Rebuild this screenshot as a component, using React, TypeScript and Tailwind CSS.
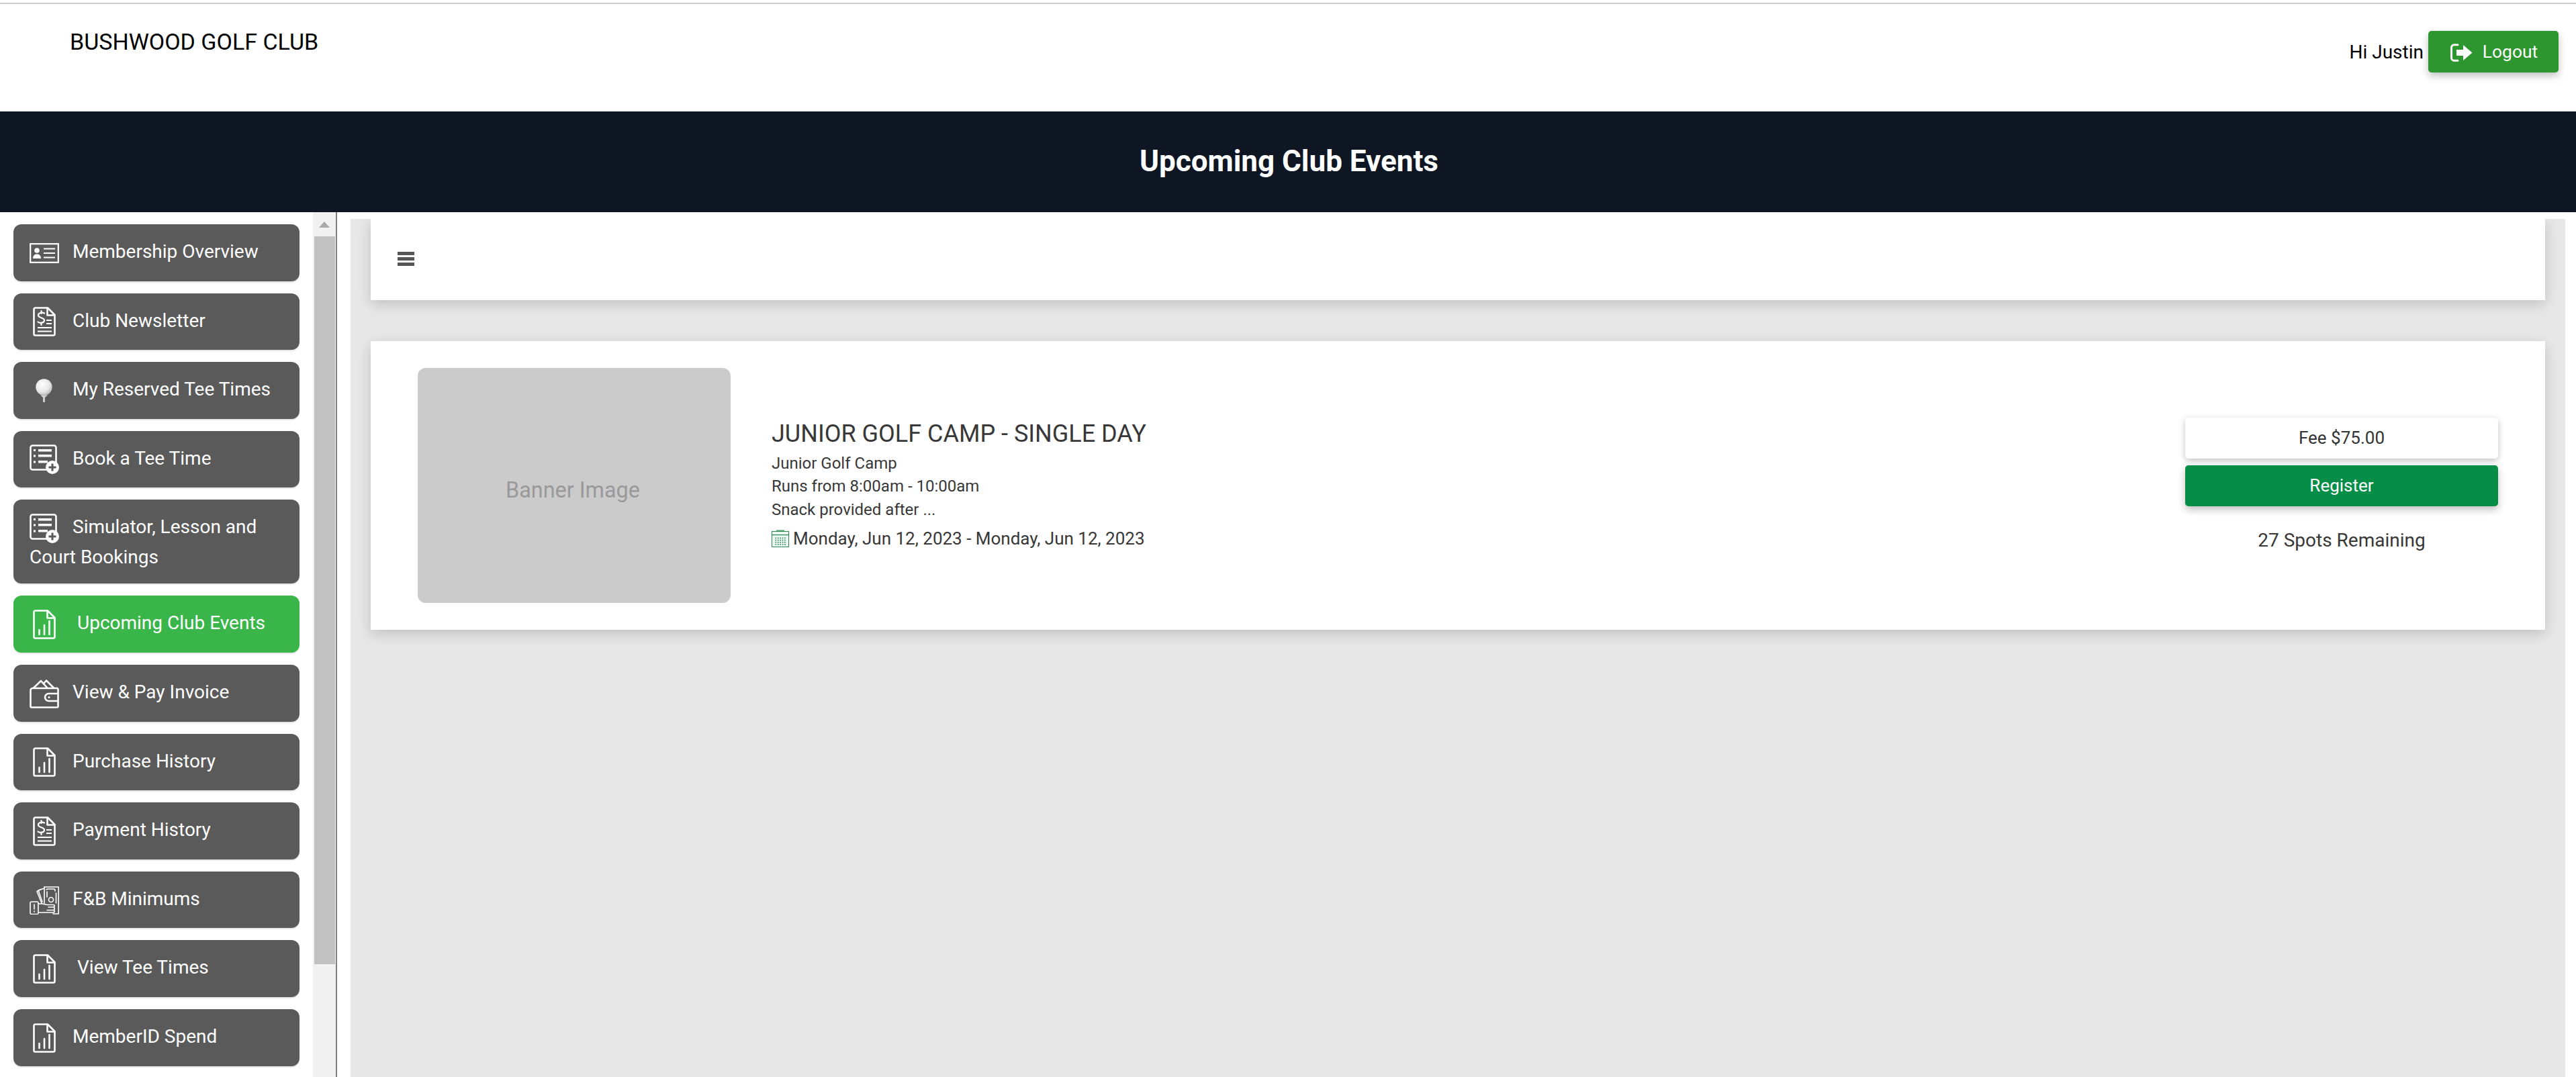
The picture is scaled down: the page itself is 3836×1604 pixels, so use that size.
import React from "react";

const S = { fill: "none", stroke: "white", strokeWidth: 2.6, strokeLinecap: "round" as const, strokeLinejoin: "round" as const };

function IdCardIcon() {
  return (
    <svg width="44" height="30" viewBox="0 0 44 30" className="inline-block align-middle mr-[20px] -my-2">
      <rect x="1.2" y="1.2" width="41.6" height="27.6" fill="none" stroke="white" strokeWidth="2.2" />
      <circle cx="11" cy="11" r="3.8" fill="white" />
      <path d="M5 23 C5 18 8 16.5 11 16.5 C14 16.5 17 18 17 23 Z" fill="white" />
      <path d="M21 8.5H38M21 15H38M21 21.5H38" stroke="white" strokeWidth="2" />
    </svg>
  );
}

function DocOutline() {
  return (
    <>
      <path d="M3.5 1.5H22L32.5 12V40.5A2 2 0 0 1 30.5 42.5H3.5A2 2 0 0 1 1.5 40.5V3.5A2 2 0 0 1 3.5 1.5Z" {...S} />
      <path d="M21.5 2V12.5H32" {...S} />
    </>
  );
}

function DocBarsIcon({ wide }: { wide?: boolean }) {
  return (
    <svg width="34" height="44" viewBox="0 0 34 44" className={wide ? "inline-block align-middle ml-[5px] mr-[32px] -my-2" : "inline-block align-middle ml-[5px] mr-[25px] -my-2"}>
      <DocOutline />
      <path d="M9.5 37V30M17 37V23M24.5 37V17" {...S} />
    </svg>
  );
}

function DocDollarIcon() {
  return (
    <svg width="34" height="44" viewBox="0 0 34 44" className="inline-block align-middle ml-[5px] mr-[25px] -my-2">
      <DocOutline />
      <path d="M17 9.5C15 8 8 8 8 12.5C8 17 17 15.5 17 20C17 24.5 10 24.5 7.5 22.5M12.5 6V10M12.5 23.5V27" fill="none" stroke="white" strokeWidth="2.2" strokeLinecap="round" />
      <path d="M20 20H28M20 25H28M7 31H28M7 36.5H28" fill="none" stroke="white" strokeWidth="2" />
    </svg>
  );
}

function ListPlusIcon() {
  return (
    <svg width="44" height="44" viewBox="0 0 44 44" className="inline-block align-middle mr-[20px] -my-2">
      <rect x="1.5" y="1.5" width="38" height="36" rx="3" {...S} />
      <path d="M6 8.5H9M6 17H9M6 26H9" stroke="white" strokeWidth="3" />
      <rect x="13" y="7" width="20" height="3.5" fill="white" />
      <rect x="13" y="15" width="20" height="3.5" fill="white" />
      <rect x="13" y="24" width="14" height="3.5" fill="white" />
      <circle cx="34" cy="34" r="10" fill="white" />
      <path d="M34 28.5V39.5M28.5 34H39.5" stroke="#5a5a5a" strokeWidth="3" />
    </svg>
  );
}

function GolfBallIcon() {
  return (
    <svg width="25" height="36" viewBox="0 0 25 36" className="inline-block align-middle ml-[9px] mr-[30px] -my-2">
      <defs>
        <radialGradient id="ball" cx="0.4" cy="0.35" r="0.75">
          <stop offset="0" stopColor="#ffffff" />
          <stop offset="0.6" stopColor="#e6e6e6" />
          <stop offset="1" stopColor="#a9a9a9" />
        </radialGradient>
      </defs>
      <circle cx="12.5" cy="12.5" r="12.2" fill="url(#ball)" />
      <path d="M7 24.5H18L14 28V35H11V28Z" fill="#cfcfcf" />
    </svg>
  );
}

function WalletIcon() {
  return (
    <svg width="44" height="44" viewBox="0 0 44 44" className="inline-block align-middle mr-[20px] -my-2">
      <path d="M5 14H40A2 2 0 0 1 42.5 16V41A1.5 1.5 0 0 1 41 42.5H3A1.5 1.5 0 0 1 1.5 41V17A3 3 0 0 1 5 14Z" {...S} />
      <path d="M6 13.5L17 3L26 13M22 6L25 2.5L36 13.5" {...S} />
      <path d="M42 22H28.5A5.5 5.5 0 0 0 28.5 33H42" {...S} />
      <circle cx="29" cy="27.5" r="1.6" fill="white" />
    </svg>
  );
}

function MoneyHandIcon() {
  return (
    <svg width="44" height="44" viewBox="0 0 44 44" className="inline-block align-middle mr-[20px] -my-2">
      <g fill="none" stroke="white" strokeWidth="1.6" strokeLinejoin="round" strokeLinecap="round">
        <path d="M22 3H43.2V43H35" />
        <path d="M22 3V27" />
        <path d="M25 7C25 6 26 6 27 6H36C37 6 38 7 38 8V9M39.5 12V27" />
        <path d="M22 5L13 8L19 25" />
        <path d="M17 6.5L11 9.5L18 27" />
        <circle cx="32" cy="22" r="3.5" />
        <path d="M26 10V18" />
        <rect x="1" y="25" width="12" height="18.5" rx="2" />
        <path d="M7 29V36M7 39V40" />
        <path d="M13 28H19L26 29.5H35C38 29.5 38 33 35 33H28M13 41H35C38 41 38 37.5 35 37.5H26M35 33C38 33 38 37.5 35 37.5" />
      </g>
    </svg>
  );
}

function LogoutIcon() {
  return (
    <svg width="33" height="27" viewBox="0 0 33 27" className="mr-[15px]">
      <path d="M11 1.8H5.5A4 4 0 0 0 1.5 5.8V21.2A4 4 0 0 0 5.5 25.2H11" fill="none" stroke="white" strokeWidth="3" strokeLinecap="round" />
      <path d="M9 9H19V2L32.5 13.5L19 25V18H9Z" fill="white" />
    </svg>
  );
}

function CalendarIcon() {
  const dots: React.ReactNode[] = [];
  for (let r = 0; r < 4; r++) {
    for (let c = 0; c < 5; c++) {
      dots.push(<rect key={`${r}-${c}`} x={5.5 + c * 3.4} y={11.5 + r * 3.2} width="1.7" height="1.7" fill="#3b8a63" />);
    }
  }
  return (
    <svg width="26" height="26" viewBox="0 0 26 26" className="inline-block align-middle mr-[6px] -mt-[4px]">
      <rect x="0.5" y="2.5" width="25" height="23" fill="#e9f7f1" stroke="#2c8a55" strokeWidth="1" />
      <rect x="0.5" y="7" width="25" height="1.2" fill="#2c8a55" />
      <rect x="7" y="0.5" width="12" height="1.2" fill="#2c8a55" />
      {dots}
    </svg>
  );
}

type Item = { label: string; icon: React.ReactNode; active?: boolean; tall?: boolean };

const items: Item[] = [
  { label: "Membership Overview", icon: <IdCardIcon /> },
  { label: "Club Newsletter", icon: <DocDollarIcon /> },
  { label: "My Reserved Tee Times", icon: <GolfBallIcon /> },
  { label: "Book a Tee Time", icon: <ListPlusIcon /> },
  { label: "Simulator, Lesson and Court Bookings", icon: <ListPlusIcon />, tall: true },
  { label: "Upcoming Club Events", icon: <DocBarsIcon wide />, active: true },
  { label: "View & Pay Invoice", icon: <WalletIcon /> },
  { label: "Purchase History", icon: <DocBarsIcon /> },
  { label: "Payment History", icon: <DocDollarIcon /> },
  { label: "F&B Minimums", icon: <MoneyHandIcon /> },
  { label: "View Tee Times", icon: <DocBarsIcon wide /> },
  { label: "MemberID Spend", icon: <DocBarsIcon /> },
];

function SideItem({ item }: { item: Item }) {
  return (
    <div
      className={[
        "shrink-0 rounded-xl px-6 pt-[18px] text-[28px] leading-[45px] text-white shadow-[0_2px_0_#e8e8e8]",
        item.tall ? "h-[125px]" : "h-[84.6px]",
        item.active ? "bg-[#3ab54a]" : "bg-[#5a5a5a]",
      ].join(" ")}
    >
      {item.icon}
      {item.label}
    </div>
  );
}

export default function App() {
  return (
    <div className="flex h-[1604px] flex-col overflow-hidden bg-white font-['Roboto',sans-serif]">
      <div className="mt-[4px] h-[2px] shrink-0 bg-[#cccccc]" />

      <header className="flex h-[160px] shrink-0 justify-between">
        <div className="pl-[104px] pt-[33px] text-[34px] leading-[46px] text-black">BUSHWOOD GOLF CLUB</div>
        <div className="flex items-start pr-[26px] pt-[40px]">
          <span className="mr-[7px] pt-[12px] text-[28px] leading-[40px] text-black">Hi Justin</span>
          <button className="flex h-[62px] w-[194px] items-center justify-center rounded-[5px] bg-[#2e962e] pl-[2px] pt-[2px] text-[26.4px] text-white shadow-[0_5px_12px_rgba(0,0,0,0.25)]">
            <LogoutIcon />
            Logout
          </button>
        </div>
      </header>

      <div className="flex h-[150px] shrink-0 items-center justify-center bg-[#0e1523] pb-[3px] pl-[3px] text-[44px] font-bold text-white">
        Upcoming Club Events
      </div>

      <div className="flex min-h-0 flex-1">
        <aside className="flex w-[502px] shrink-0 border-r-2 border-[#808080]">
          <nav className="flex w-[466px] shrink-0 flex-col gap-[18px] pl-[20px] pr-[20px] pt-[18px]">
            {items.map((item) => (
              <SideItem key={item.label} item={item} />
            ))}
          </nav>
          <div className="flex w-[34px] flex-col items-center bg-[#f1f1f1]">
            <div className="flex h-[36px] w-full shrink-0 items-center justify-center">
              <div className="h-0 w-0 border-x-[8px] border-b-[9px] border-x-transparent border-b-[#a8a8a8]" />
            </div>
            <div className="h-[1084px] w-[31px] shrink-0 bg-[#c1c1c1]" />
          </div>
        </aside>

        <main className="ml-[20px] mr-[16px] mt-[10px] flex min-w-0 flex-1 flex-col gap-[61px] overflow-hidden bg-[#e8e8e8] px-[30px]">
          <div className="flex h-[121px] shrink-0 items-center bg-white pb-[2px] pl-[40px] shadow-[0_6px_20px_rgba(0,0,0,0.18)]">
            <div className="flex w-[25px] flex-col gap-[3.5px]">
              <div className="h-[4.5px] bg-[#555555]" />
              <div className="h-[4.5px] bg-[#555555]" />
              <div className="h-[4.5px] bg-[#555555]" />
            </div>
          </div>

          <section className="flex h-[430px] shrink-0 items-center bg-white pl-[70px] pr-[70px] shadow-[0_6px_20px_rgba(0,0,0,0.18)]">
            <div className="flex h-[350px] w-[466px] shrink-0 items-center justify-center rounded-xl bg-[#cbcbcb] pr-[4px] pt-[14px] text-[32.4px] text-[#999999]">
              Banner Image
            </div>
            <div className="ml-[61px] flex-1 text-[#383838]">
              <div className="text-[36px] leading-[44px]">JUNIOR GOLF CAMP - SINGLE DAY</div>
              <div className="mt-[5px] text-[24px] leading-[34.5px]">Junior Golf Camp</div>
              <div className="text-[24px] leading-[34.5px]">Runs from 8:00am - 10:00am</div>
              <div className="text-[24px] leading-[34.5px]">Snack provided after ...</div>
              <div className="mt-[6px] text-[26px] leading-[40px]">
                <CalendarIcon />
                Monday, Jun 12, 2023 - Monday, Jun 12, 2023
              </div>
            </div>
            <div className="flex w-[466px] shrink-0 flex-col">
              <div className="flex h-[61px] items-center justify-center rounded-[5px] bg-white text-[26px] text-[#333333] shadow-[0_3px_10px_rgba(0,0,0,0.25)]">
                Fee $75.00
              </div>
              <button className="mt-[10px] h-[61px] rounded-[5px] bg-[#068d48] text-[26px] text-white shadow-[0_5px_12px_rgba(0,0,0,0.25)]">
                Register
              </button>
              <div className="mt-[32px] text-center text-[28px] leading-[38px] text-[#383838]">27 Spots Remaining</div>
            </div>
          </section>
        </main>
      </div>
    </div>
  );
}
